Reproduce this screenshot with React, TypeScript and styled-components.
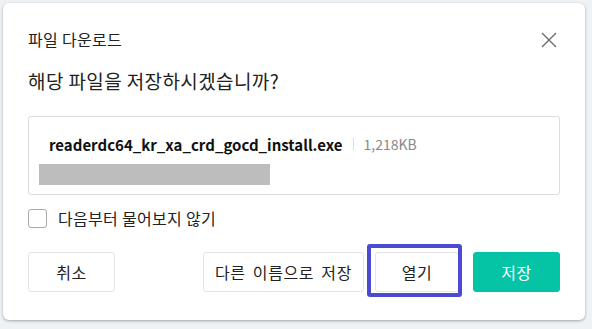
import React from "react";
import styled, { createGlobalStyle } from "styled-components";

const GlobalStyle = createGlobalStyle`
  body {
    margin: 0;
    background-color: #eef2f5;
    font-family: "Noto Sans CJK KR", "Noto Sans", sans-serif;
  }
`;

const Page = styled.div`
  width: 592px;
  height: 329px;
  padding: 3px 0 0 3px;
  box-sizing: border-box;
`;

const Dialog = styled.div`
  width: 582px;
  height: 317px;
  box-sizing: border-box;
  background-color: #ffffff;
  border-radius: 6px;
  box-shadow: 0 1px 3px rgba(0, 0, 0, 0.32);
  padding: 0 25px;
  display: flex;
  flex-direction: column;
`;

const Header = styled.div`
  display: flex;
  align-items: center;
  justify-content: space-between;
  height: 30px;
  margin-top: 21px;
`;

const Title = styled.h1`
  margin: 0;
  font-size: 16px;
  font-weight: 400;
  color: #222;
  letter-spacing: 0.3px;
`;

const CloseButton = styled.button`
  width: 20px;
  height: 20px;
  padding: 0;
  margin: 2px 1px 0 0;
  border: none;
  background: none;
  display: flex;
  align-items: center;
  justify-content: center;
  cursor: pointer;
`;

const Question = styled.p`
  margin: 15px 0 0;
  font-size: 19px;
  line-height: 24px;
  color: #222;
  letter-spacing: 0.4px;
`;

const FileBox = styled.div`
  margin-top: 23px;
  height: 79px;
  box-sizing: border-box;
  border: 1px solid #dcdcdc;
  border-radius: 3px;
  padding: 16px 20px 0;
`;

const FileRow = styled.div`
  display: flex;
  align-items: center;
  height: 22px;
`;

const FileName = styled.span`
  font-size: 15px;
  font-weight: 700;
  color: #111;
`;

const Divider = styled.span`
  width: 1px;
  height: 12px;
  background-color: #ddd;
  margin: 0 10px;
`;

const FileSize = styled.span`
  font-size: 14px;
  color: #888;
`;

const Redaction = styled.div`
  margin: 9px 0 0 -10px;
  width: 231px;
  height: 21px;
  background-color: #bdbdbd;
`;

const CheckRow = styled.label`
  display: flex;
  align-items: center;
  margin-top: 13px;
  height: 20px;
  gap: 11px;
  font-size: 16px;
  color: #222;
  letter-spacing: 0.3px;
`;

const CheckBox = styled.span`
  width: 19px;
  height: 19px;
  box-sizing: border-box;
  border: 1px solid #a9a9a9;
  border-radius: 3px;
  background: #fff;
`;

const Footer = styled.div`
  display: flex;
  align-items: center;
  margin-top: 24px;
`;

const Actions = styled.div`
  margin-left: auto;
  display: flex;
  align-items: center;
`;

const Button = styled.button<{ $primary?: boolean; $width: number }>`
  width: ${(p) => p.$width}px;
  height: 40px;
  box-sizing: border-box;
  border-radius: 3px;
  border: 1px solid ${(p) => (p.$primary ? "#05c3a5" : "#e3e3e3")};
  background-color: ${(p) => (p.$primary ? "#05c3a5" : "#fff")};
  color: ${(p) => (p.$primary ? "#fff" : "#222")};
  font-family: "Noto Sans CJK KR", "Noto Sans", sans-serif;
  font-size: 16px;
  letter-spacing: 0.6px;
  word-spacing: 3px;
  padding: 0;
  cursor: pointer;
`;

const Highlight = styled.span`
  position: relative;
  display: flex;
  margin: 0 14px 0 11px;

  &::after {
    content: "";
    position: absolute;
    inset: -8px -3px -5px -8px;
    border: 4px solid #4a4ad2;
    border-radius: 3px;
    pointer-events: none;
  }
`;

const App: React.FC = () => {
  return (
    <Page>
      <GlobalStyle />
      <Dialog>
        <Header>
          <Title>파일 다운로드</Title>
          <CloseButton aria-label="닫기">
            <svg width="16" height="16" viewBox="0 0 16 16">
              <path d="M1 1 L15 15 M15 1 L1 15" stroke="#6b6b6b" strokeWidth="1.4" fill="none" />
            </svg>
          </CloseButton>
        </Header>
        <Question>해당 파일을 저장하시겠습니까?</Question>
        <FileBox>
          <FileRow>
            <FileName>readerdc64_kr_xa_crd_gocd_install.exe</FileName>
            <Divider />
            <FileSize>1,218KB</FileSize>
          </FileRow>
          <Redaction />
        </FileBox>
        <CheckRow>
          <CheckBox />
          다음부터 물어보지 않기
        </CheckRow>
        <Footer>
          <Button $width={87}>취소</Button>
          <Actions>
            <Button $width={161}>다른 이름으로 저장</Button>
            <Highlight>
              <Button $width={84}>열기</Button>
            </Highlight>
            <Button $width={87} $primary>
              저장
            </Button>
          </Actions>
        </Footer>
      </Dialog>
    </Page>
  );
};

export default App;
